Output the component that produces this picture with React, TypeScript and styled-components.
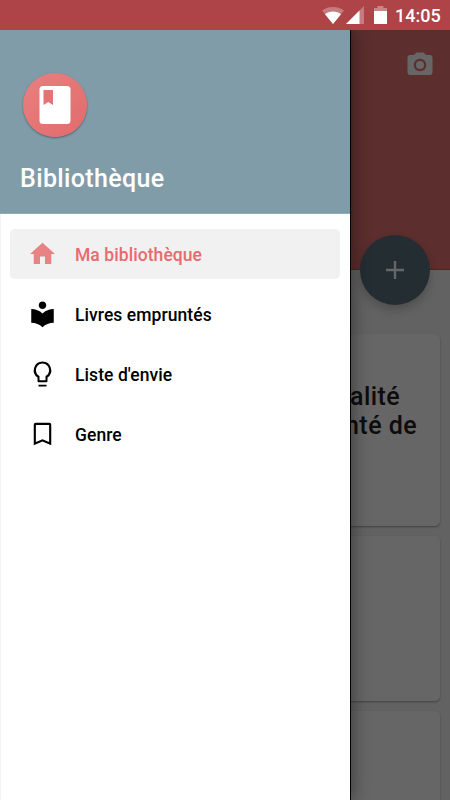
import React from "react";
import styled, { createGlobalStyle } from "styled-components";

const GlobalStyle = createGlobalStyle`
  * { box-sizing: border-box; }
  body { margin: 0; background: #fafafa; font-family: Roboto, "Noto Sans", sans-serif; font-weight: 500; }
`;

const Screen = styled.div`
  position: relative;
  width: 450px;
  height: 800px;
  overflow: hidden;
  display: flex;
  flex-direction: column;
  background: #f4f4f4;
`;

const StatusBar = styled.header`
  flex: none;
  height: 30px;
  display: flex;
  align-items: center;
  justify-content: flex-end;
  padding: 2px 10px 0 0;
  background: #ae4448;
  color: #fff;
`;

const StatusIcons = styled.svg`
  display: block;
  margin-right: 7px;
`;

const Clock = styled.time`
  font-size: 18px;
  line-height: 28px;
  width: 45px;
  white-space: nowrap;
`;

const Body = styled.div`
  position: relative;
  flex: 1;
  min-height: 0;
  overflow: hidden;
`;

const Toolbar = styled.div`
  height: 240px;
  display: flex;
  justify-content: flex-end;
  align-items: flex-start;
  padding: 20px 15px 0;
  background: #e57373;
  border-bottom: 1px solid #dc5050;
  color: #fff;
`;

const Fab = styled.button`
  position: absolute;
  top: 205px;
  right: 20px;
  width: 70px;
  height: 70px;
  display: grid;
  place-items: center;
  padding: 0;
  border: 0;
  border-radius: 50%;
  background: #5a707b;
  color: #fff;
  box-shadow: 0 5px 10px rgba(0, 0, 0, 0.2);
`;

const Cards = styled.main`
  display: flex;
  flex-direction: column;
  gap: 10px;
  padding: 64px 10px 0;
`;

const Card = styled.article<{ $height: number }>`
  height: ${(p) => p.$height}px;
  padding: 48px 0 0 335px;
  border-radius: 5px;
  background: #fff;
  box-shadow: 0 1px 2px rgba(0, 0, 0, 0.35);
`;

const CardTitle = styled.h2`
  margin: 0;
  font-size: 25px;
  font-weight: 500;
  line-height: 29px;
  letter-spacing: 0.45px;
  color: #212121;
  white-space: nowrap;
`;

const TitleLine = styled.span<{ $indent: number }>`
  display: block;
  padding-left: ${(p) => p.$indent}px;
`;

const Scrim = styled.div`
  position: absolute;
  inset: 0;
  background: rgba(0, 0, 0, 0.6);
`;

const Drawer = styled.aside`
  position: absolute;
  top: 0;
  left: 0;
  bottom: 0;
  width: 351px;
  background: #fff;
  border-right: 1px solid #000;
  box-shadow: 2px 0 16px rgba(0, 0, 0, 0.4);
`;

const DrawerHeader = styled.div`
  height: 184px;
  display: flex;
  flex-direction: column;
  align-items: flex-start;
  padding: 43px 20px 0;
  background: #819ca9;
  border-bottom: 1px solid #93a9b5;
`;

const Logo = styled.div`
  width: 64px;
  height: 64px;
  margin-left: 3px;
  display: grid;
  place-items: center;
  border-radius: 50%;
  background: linear-gradient(135deg, #e88080, #e26b6b);
  box-shadow: 0 1px 2px rgba(40, 50, 60, 0.6);
`;

const AppName = styled.h1`
  margin: 26px 0 0;
  font-size: 25px;
  font-weight: 500;
  line-height: 32px;
  letter-spacing: 0.36px;
  color: #fff;
`;

const Menu = styled.nav`
  height: 586px;
  display: flex;
  flex-direction: column;
  gap: 10px;
  padding: 15px 10px 0 9px;
  border-left: 1px solid #f3f3f3;
`;

const MenuItem = styled.a<{ $active?: boolean }>`
  height: 50px;
  display: flex;
  align-items: center;
  gap: 18px;
  padding-left: 17px;
  border-radius: 5px;
  font-size: 17.5px;
  letter-spacing: 0.07px;
  background: ${(p) => (p.$active ? "#f1f1f1" : "transparent")};
  color: ${(p) => (p.$active ? "#e86a6e" : "#000")};
`;

const MenuLabel = styled.span`
  padding-top: 1px;
`;

const MenuIcon = styled.svg<{ $soft?: boolean }>`
  width: 30px;
  height: 30px;
  flex: none;
  fill: currentColor;
  opacity: ${(p) => (p.$soft ? 0.82 : 1)};
`;

const items = [
  { label: "Ma bibliothèque", active: true, path: "M10 20v-6h4v6h5v-8h3L12 3 2 12h3v8z" },
  {
    label: "Livres empruntés",
    path: "M12 11.55C9.64 9.35 6.48 8 3 8v11c3.48 0 6.64 1.35 9 3.55 2.36-2.19 5.52-3.55 9-3.55V8c-3.48 0-6.64 1.35-9 3.55zM12 8c1.66 0 3-1.34 3-3s-1.34-3-3-3-3 1.34-3 3 1.34 3 3 3z",
  },
  {
    label: "Liste d'envie",
    path: "M8.800 20.500h6.400V22H8.800zM12 2a7 7 0 0 0-4 12.740V17.500a1 1 0 0 0 1 1h6a1 1 0 0 0 1-1v-2.760A7 7 0 0 0 12 2zm3.050 11.250-.65.5V17H9.600v-3.250l-.65-.5A5.300 5.300 0 1 1 15.050 13.250z",
  },
  {
    label: "Genre",
    path: "M17.500 3h-11A1.500 1.500 0 0 0 5 4.500V21l7-3 7 3V4.500A1.500 1.500 0 0 0 17.500 3zm-.2 15.400L12 16.150 6.700 18.400V4.700h10.600z",
  },
];

export default function App() {
  return (
    <>
      <GlobalStyle />
      <Screen>
        <StatusBar>
          <StatusIcons width="66" height="20" viewBox="0 0 66 20">
            <path d="M0 4.500C6.500-.1 15.500-.1 22 4.500L11 18z" fill="#fff" fillOpacity=".3" />
            <path d="M3 8.200C7.500 4.700 14.500 4.700 19 8.200L11 18z" fill="#fff" />
            <path d="M24 18 42 0V18z" fill="#fff" fillOpacity=".3" />
            <path d="M24 18 37.500 4.500V18z" fill="#fff" />
            <path d="M55.500 0h6v2H65v4H52V2h3.500z" fill="#fff" fillOpacity=".35" />
            <path d="M52 5h13v13H52z" fill="#fff" />
          </StatusIcons>
          <Clock>14:05</Clock>
        </StatusBar>
        <Body>
          <Toolbar>
            <svg width="30" height="30" viewBox="0 0 24 24" fill="currentColor">
              <path d="M9 2 7.170 4H4c-1.100 0-2 .9-2 2v12c0 1.100.9 2 2 2h16c1.100 0 2-.9 2-2V6c0-1.100-.9-2-2-2h-3.170L15 2H9zm3 15c-2.760 0-5-2.240-5-5s2.240-5 5-5 5 2.240 5 5-2.240 5-5 5z" />
              <circle cx="12" cy="12" r="3.200" />
            </svg>
          </Toolbar>
          <Cards>
            <Card $height={192}>
              <CardTitle>
                <TitleLine $indent={5}>alité</TitleLine>
                <TitleLine $indent={0}>nté de</TitleLine>
              </CardTitle>
            </Card>
            <Card $height={165} />
            <Card $height={165} />
          </Cards>
          <Fab aria-label="Ajouter">
            <svg width="18" height="18" viewBox="0 0 18 18" fill="currentColor">
              <path d="M7.800 0h2.400v7.800H18v2.400h-7.800V18H7.800v-7.800H0V7.800h7.800z" />
            </svg>
          </Fab>
          <Scrim />
          <Drawer>
            <DrawerHeader>
              <Logo>
                <svg width="32" height="38" viewBox="0 0 32 38">
                  <rect x=".5" width="31" height="38" rx="3.500" fill="#fff" />
                  <path d="M4.500 4h9.500v15l-4.750-3L4.500 19z" fill="#e57373" />
                </svg>
              </Logo>
              <AppName>Bibliothèque</AppName>
            </DrawerHeader>
            <Menu>
              {items.map((item) => (
                <MenuItem key={item.label} $active={item.active}>
                  <MenuIcon viewBox="-0.4 0 24 24" $soft={item.active}>
                    <path d={item.path} />
                  </MenuIcon>
                  <MenuLabel>{item.label}</MenuLabel>
                </MenuItem>
              ))}
            </Menu>
          </Drawer>
        </Body>
      </Screen>
    </>
  );
}
